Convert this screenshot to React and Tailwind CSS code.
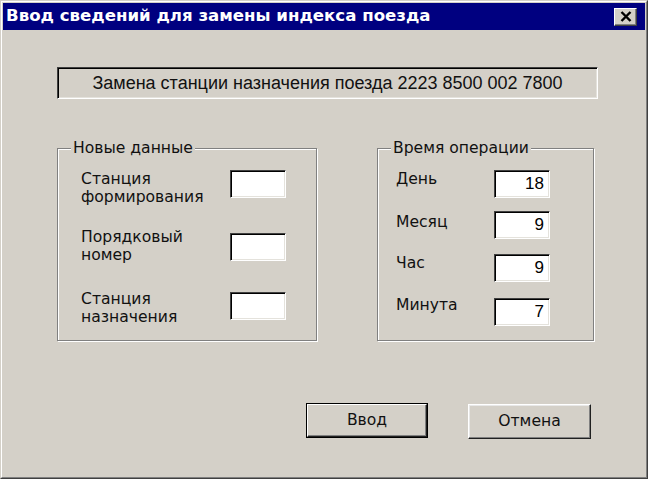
import React from "react";

const F = { fontFamily: '"DejaVu Sans", "Noto Sans", sans-serif' };

function Field({ value }) {
  return (
    <div className="w-[56px] h-[28px] bg-white border border-t-[#404040] border-l-[#404040] border-r-white border-b-white shadow-[inset_1px_1px_0_#000,inset_-1px_-1px_0_#e4e2dc] flex items-center justify-end pr-[5px] text-[17px] text-black [font-family:'Liberation_Sans',Arial,sans-serif]">
      {value}
    </div>
  );
}

export default function App() {
  return (
    <div className="w-[648px] h-[479px] bg-[#d4d0c8] border border-t-[#d4d0c8] border-l-[#d4d0c8] border-r-[#404040] border-b-[#404040]">
      <div className="h-full border border-t-white border-l-white border-r-[#808080] border-b-[#808080] p-px flex flex-col">
        <div className="h-[27px] bg-[#000080] flex items-center justify-between pl-[3px] pr-[8px]">
          <span className="text-white font-bold text-[16.6px] leading-none" style={F}>
            Ввод сведений для замены индекса поезда
          </span>
          <div className="w-[23px] h-[18px] bg-[#d4d0c8] border border-t-white border-l-white border-r-[#404040] border-b-[#404040] shadow-[inset_-1px_-1px_0_#808080] flex items-center justify-center">
            <svg width="12" height="11" viewBox="0 0 12 11">
              <path d="M1.5 1 L10.5 10 M10.5 1 L1.5 10" stroke="#000" strokeWidth="2.4" />
            </svg>
          </div>
        </div>

        <div className="flex flex-col pl-[54px]">
          <div className="mt-[37px] w-[541px] h-[32px] border border-t-[#404040] border-l-[#404040] border-r-white border-b-white shadow-[inset_1px_1px_0_#000,inset_-1px_-1px_0_#e4e2dc] flex items-center justify-center text-[18px] text-[#111] [font-family:'Liberation_Sans',Arial,sans-serif]">
            Замена станции назначения поезда 2223 8500 002 7800
          </div>

          <div className="mt-[49px] flex" style={F}>
            <div className="relative w-[260px] h-[193px] border border-[#808080] shadow-[inset_1px_1px_0_#fff,1px_1px_0_#fff] text-[15.6px] leading-[18px] text-[#111]">
              <span className="absolute left-[13px] top-[-10px] bg-[#d4d0c8] px-[2px]">Новые данные</span>
              <div className="flex flex-col pl-[23px] pt-[21px]">
                <div className="flex">
                  <div className="w-[149px]">Станция<br />формирования</div>
                  <Field />
                </div>
                <div className="flex mt-[22px]">
                  <div className="w-[149px]">Порядковый<br />номер</div>
                  <div className="mt-[5px]"><Field /></div>
                </div>
                <div className="flex mt-[26px]">
                  <div className="w-[149px]">Станция<br />назначения</div>
                  <div className="mt-[2px]"><Field /></div>
                </div>
              </div>
            </div>

            <div className="relative ml-[60px] w-[217px] h-[193px] border border-[#808080] shadow-[inset_1px_1px_0_#fff,1px_1px_0_#fff] text-[15.6px] leading-[18px] text-[#111]">
              <span className="absolute left-[13px] top-[-10px] bg-[#d4d0c8] px-[2px]">Время операции</span>
              <div className="flex flex-col pl-[18px] pt-[21px]">
                <div className="flex">
                  <div className="w-[98px]">День</div>
                  <Field value="18" />
                </div>
                <div className="flex mt-[13px]">
                  <div className="w-[98px] mt-[2px]">Месяц</div>
                  <Field value="9" />
                </div>
                <div className="flex mt-[15px]">
                  <div className="w-[98px]">Час</div>
                  <Field value="9" />
                </div>
                <div className="flex mt-[14px]">
                  <div className="w-[98px]">Минута</div>
                  <div className="mt-[2px]"><Field value="7" /></div>
                </div>
              </div>
            </div>
          </div>

          <div className="mt-[62px] flex items-start pl-[249px] text-[15.6px] text-[#111]" style={F}>
            <div className="w-[122px] h-[35px] border border-black flex">
              <div className="flex-1 border border-t-white border-l-white border-r-[#202020] border-b-[#202020] shadow-[inset_-1px_-1px_0_#808080] flex items-center justify-center">
                Ввод
              </div>
            </div>
            <div className="ml-[40px] mt-[1px] w-[123px] h-[35px] border border-t-white border-l-white border-r-[#202020] border-b-[#202020] shadow-[inset_-1px_-1px_0_#808080,inset_1px_1px_0_#e8e8e8] flex items-center justify-center">
              Отмена
            </div>
          </div>
        </div>
      </div>
    </div>
  );
}
